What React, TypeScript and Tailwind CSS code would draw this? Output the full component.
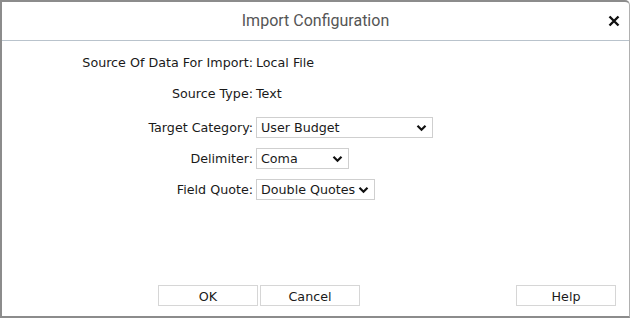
import React from 'react';

interface Row {
  label: string;
  value: string;
  select?: number; // width of the dropdown box, px
  gapTop?: boolean;
}

const rows: Row[] = [
  { label: 'Source Of Data For Import:', value: 'Local File' },
  { label: 'Source Type:', value: 'Text' },
  { label: 'Target Category:', value: 'User Budget', select: 177, gapTop: true },
  { label: 'Delimiter:', value: 'Coma', select: 93 },
  { label: 'Field Quote:', value: 'Double Quotes', select: 119 },
];

const Chevron = () => (
  <svg width="11" height="8" viewBox="0 0 11 8" className="shrink-0">
    <path d="M1.5 1.8 L5.5 5.8 L9.5 1.8" fill="none" stroke="#111" strokeWidth="2.2" />
  </svg>
);

const FakeSelect = ({ value, width }: { value: string; width: number }) => (
  <div
    className="flex items-center justify-between gap-[2px] h-[21px] border border-[#cfcfcf] bg-white pl-[4px] pr-[5px] text-[#1a1a1a]"
    style={{ width }}
  >
    <span className="whitespace-nowrap">{value}</span>
    <Chevron />
  </div>
);

const App: React.FC = () => {
  return (
    <div className="w-[630px] h-[318px] bg-white">
      <div className="flex flex-col h-full border-l-2 border-t-2 border-b-2 border-r border-l-[#8c8c8c] border-t-[#8c8c8c] border-b-[#8c8c8c] border-r-[#b0b0b0] rounded-tr-[5px]">
        {/* header */}
        <div className="relative h-[39px] border-b border-[#b9c3cc] flex items-center justify-center">
          <span className="text-[16px] text-[#555] font-['Roboto',sans-serif]">Import Configuration</span>
          <button className="absolute right-[9px] top-[13px]">
            <svg width="12" height="12" viewBox="0 0 12 12">
              <path d="M1.5 1.5 L10.5 10.5 M10.5 1.5 L1.5 10.5" stroke="#111" strokeWidth="2.4" />
            </svg>
          </button>
        </div>

        {/* body */}
        <div className="flex-1 pt-[6px] text-[12.7px] text-[#1a1a1a] font-['DejaVu_Sans',sans-serif]">
          {rows.map((row) => (
            <div key={row.label} className={`flex items-center h-[31px] ${row.gapTop ? 'mt-[3px]' : ''}`}>
              <div className="w-[251px] text-right whitespace-nowrap">{row.label}</div>
              <div className="pl-[3px]">
                {row.select ? <FakeSelect value={row.value} width={row.select} /> : <span>{row.value}</span>}
              </div>
            </div>
          ))}
        </div>

        {/* footer */}
        <div className="flex items-center h-[21px] mb-[10px] pl-[156px] pr-[13px] text-[12.7px] text-[#1a1a1a] font-['DejaVu_Sans',sans-serif]">
          <button className="w-[100px] h-[21px] pt-px border border-[#d6d6d6] bg-white">OK</button>
          <button className="w-[100px] h-[21px] pt-px ml-[2px] border border-[#d6d6d6] bg-white">Cancel</button>
          <button className="w-[100px] h-[21px] pt-px ml-auto border border-[#d6d6d6] bg-white">Help</button>
        </div>
      </div>
    </div>
  );
};

export default App;
